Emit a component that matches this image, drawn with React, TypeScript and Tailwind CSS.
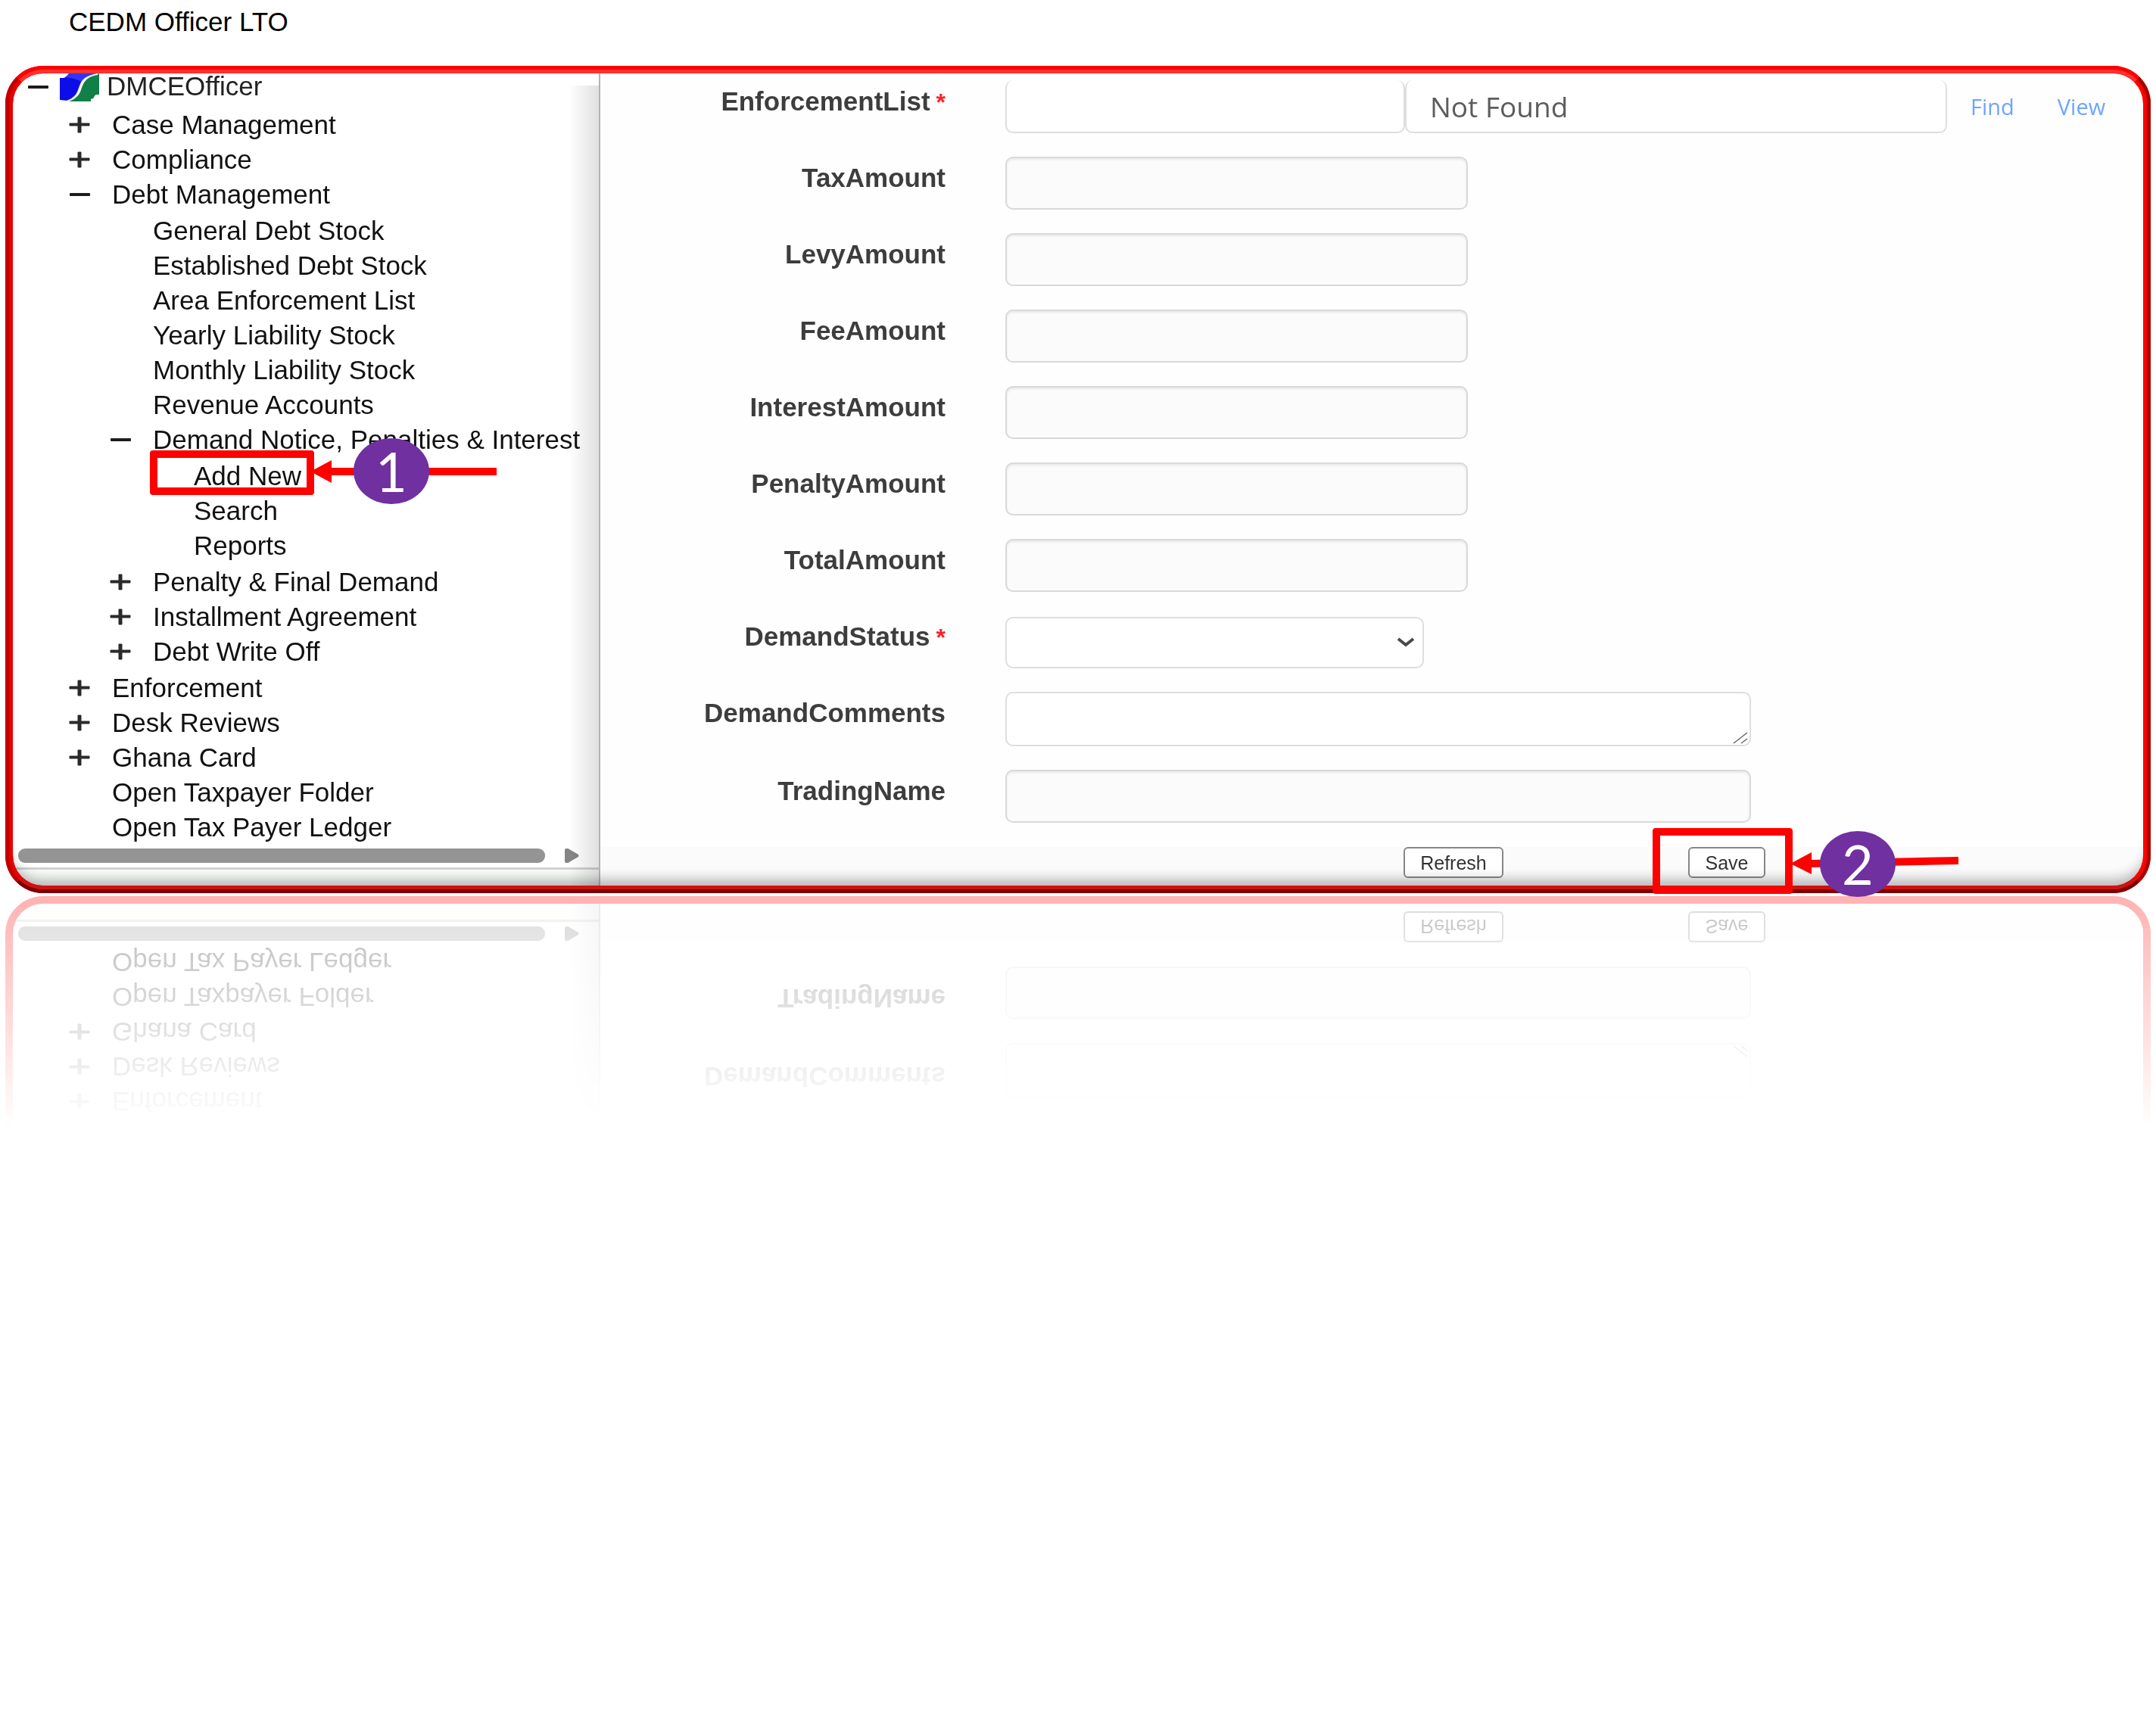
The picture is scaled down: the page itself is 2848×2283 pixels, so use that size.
import type { ReactNode } from "react";

type Node = { label: string; open?: boolean; closed?: boolean; children?: Node[] };

const tree: Node[] = [
  { label: "Case Management", closed: true },
  { label: "Compliance", closed: true },
  {
    label: "Debt Management",
    open: true,
    children: [
      { label: "General Debt Stock" },
      { label: "Established Debt Stock" },
      { label: "Area Enforcement List" },
      { label: "Yearly Liability Stock" },
      { label: "Monthly Liability Stock" },
      { label: "Revenue Accounts" },
      {
        label: "Demand Notice, Penalties & Interest",
        open: true,
        children: [{ label: "Add New" }, { label: "Search" }, { label: "Reports" }],
      },
      { label: "Penalty & Final Demand", closed: true },
      { label: "Installment Agreement", closed: true },
      { label: "Debt Write Off", closed: true },
    ],
  },
  { label: "Enforcement", closed: true },
  { label: "Desk Reviews", closed: true },
  { label: "Ghana Card", closed: true },
  { label: "Open Taxpayer Folder" },
  { label: "Open Tax Payer Ledger" },
];

const amounts = ["TaxAmount", "LevyAmount", "FeeAmount", "InterestAmount", "PenaltyAmount", "TotalAmount"];

function ToggleIcon({ open }: { open: boolean }) {
  return (
    <svg viewBox="0 0 28 22" className="h-[22px] w-7" aria-hidden="true">
      {open ? (
        <rect x="1" y="9" width="27" height="4" rx="1" fill="#1c1c1c" />
      ) : (
        <path d="M1 9h11V1h4v8h11v3H16v9h-4v-9H1z" fill="#2a2a2a" stroke="#2a2a2a" strokeWidth="1" />
      )}
    </svg>
  );
}

function TreeList({ nodes, nested }: { nodes: Node[]; nested?: boolean }) {
  return (
    <ul className={nested ? "py-0.5 pl-[54px]" : "pl-[74px]"}>
      {nodes.map((n) => (
        <li key={n.label}>
          <div className="flex h-[46px] items-center gap-[29px]">
            {n.open || n.closed ? (
              <button type="button" className="w-7 shrink-0" aria-label={n.label} aria-expanded={!!n.open}>
                <ToggleIcon open={!!n.open} />
              </button>
            ) : (
              <span className="w-7 shrink-0" />
            )}
            <a href="#" className="text-[35px] leading-[46px] whitespace-nowrap text-[#111]">
              {n.label}
            </a>
          </div>
          {n.children && <TreeList nodes={n.children} nested />}
        </li>
      ))}
    </ul>
  );
}

function Logo() {
  return (
    <svg viewBox="0 0 52 37" className="h-[37px] w-[52px]" aria-hidden="true">
      <path d="M0 6h5q4-1 7-6h36v2C36 4 31 8 28 14s-3 10-6 14-7 7-12 8l-10-1z" fill="#0d0de8" />
      <path d="M12 0h36C37 4 32 6 29 12 25 8 16 6 7 5q3-2 5-5z" fill="#3434f4" />
      <path d="M52 0v28h-3q-3 0-4 4-2 2-4 2v3H12c6-2 10-5 13-9s3-8 6-14S40 4 47 2z" fill="#118046" />
      <path d="M50 1C37 3 31 7 28 14s-3 10-6 14-7 7-13 9" fill="none" stroke="#e6f6ff" strokeWidth="2" />
    </svg>
  );
}

function Field({ id, required, children }: { id: string; required?: boolean; children: ReactNode }) {
  return (
    <div className="grid grid-cols-[456px_1fr] gap-x-[79px]">
      <label
        htmlFor={id}
        className="pt-2 text-right text-[35px] leading-10 font-bold whitespace-nowrap text-[#3d3d3d]"
      >
        {id}
        {required && <span className="pl-2 text-[32px] text-[#ff2020]">*</span>}
      </label>
      <div className="flex min-h-[70px] items-end">{children}</div>
    </div>
  );
}

function Badge({ className, children }: { className: string; children: ReactNode }) {
  return (
    <span
      className={`absolute flex h-[87px] w-[100px] items-center justify-center rounded-[50%] bg-[#7030a0] font-[Lato,sans-serif] text-[72px] leading-[87px] text-white ${className}`}
    >
      {children}
    </span>
  );
}

export default function App() {
  return (
    <div className="min-h-screen bg-white font-['Liberation_Sans',Arial,sans-serif]">
      <header className="pt-[9px] pb-[38px] pl-[91px]">
        <h1 className="text-[35px] leading-10 text-black">CEDM Officer LTO</h1>
      </header>

      <div className="relative mx-[7px]">
        <main className="flex overflow-hidden rounded-[50px] border-[10px] border-[#ff0000] bg-white [-webkit-box-reflect:below_4px_linear-gradient(to_top,rgba(0,0,0,0.3),transparent_28%)]">
          <nav className="relative flex w-[776px] shrink-0 flex-col border-r-2 border-[#b4b4b4]">
            <div className="flex h-[45px] items-start pl-[19px]">
              <button type="button" className="mt-[7px] w-7" aria-label="DMCEOfficer" aria-expanded="true">
                <ToggleIcon open />
              </button>
              <span className="ml-[15px]">
                <Logo />
              </span>
              <a href="#" className="ml-2.5 text-[35px] leading-[34px] text-[#222]">
                DMCEOfficer
              </a>
            </div>
            <TreeList nodes={tree} />
            <div className="mt-[5px] flex h-[19px] items-center gap-[26px] pl-[7px]">
              <div className="h-[19px] w-[696px] rounded-[9px] bg-[#949494]" />
              <svg viewBox="0 0 19 19" className="size-[19px]" aria-hidden="true">
                <path d="M0 2q0-2 2-2h2q1 0 2 1l12 7q1 1.500 0 3l-12 7q-1 1-2 1h-2q-2 0-2-2z" fill="#858585" />
              </svg>
            </div>
            <div className="mt-1.5 h-6 border-t-[3px] border-[#d3d3d3] bg-[#fafdf9]" />
            <div className="pointer-events-none absolute top-4 right-0 bottom-0 w-10 bg-linear-to-r from-transparent to-black/12" />
          </nav>

          <form className="flex min-w-0 flex-1 flex-col bg-[#fefefe]" onSubmit={(e) => e.preventDefault()}>
            <div className="flex flex-col gap-[31px] pt-[9px]">
              <Field id="EnforcementList" required>
                <div className="flex h-[70px] items-center">
                  <input
                    id="EnforcementList"
                    className="h-[70px] w-[528px] rounded-[10px] border-2 border-t-0 border-[#dedede] bg-white px-8"
                  />
                  <input
                    aria-label="Enforcement list name"
                    readOnly
                    defaultValue="Not Found"
                    className="h-[70px] w-[716px] rounded-[10px] border-2 border-t-0 border-[#dedede] bg-white px-[31px] font-['Open_Sans',sans-serif] text-[37px] text-[#5c5c5c]"
                  />
                  <a href="#" className="ml-[31px] font-['Open_Sans',sans-serif] text-[29px] text-[#6fa4ff]">
                    Find
                  </a>
                  <a href="#" className="ml-[57px] font-['Open_Sans',sans-serif] text-[29px] text-[#6fa4ff]">
                    View
                  </a>
                </div>
              </Field>
              {amounts.map((a) => (
                <Field key={a} id={a}>
                  <input
                    id={a}
                    readOnly
                    className="h-[70px] w-[611px] rounded-[10px] border-2 border-[#d9d9d9] bg-[#fbfbfb] px-8 shadow-[inset_0_2px_3px_rgba(0,0,0,0.08)]"
                  />
                </Field>
              ))}
              <Field id="DemandStatus" required>
                <div className="relative">
                  <select
                    id="DemandStatus"
                    className="block h-[68px] w-[553px] appearance-none rounded-[10px] border-2 border-[#dedede] bg-white px-8"
                  />
                  <svg
                    viewBox="0 0 24 14"
                    className="pointer-events-none absolute top-[27px] right-3 h-3.5 w-6"
                    aria-hidden="true"
                  >
                    <path d="M2 2l10 8 10-8" fill="none" stroke="#4a4a4a" strokeWidth="4" />
                  </svg>
                </div>
              </Field>
              <Field id="DemandComments">
                <div className="relative">
                  <textarea
                    id="DemandComments"
                    className="block h-[72px] w-[985px] resize-none rounded-[10px] border-2 border-[#dedede] bg-white px-8"
                  />
                  <svg
                    viewBox="0 0 20 16"
                    className="pointer-events-none absolute right-1 bottom-[3px] h-4 w-5"
                    aria-hidden="true"
                  >
                    <path d="M1 15L19 1M11 15L19 9" fill="none" stroke="#666" strokeWidth="1.500" />
                  </svg>
                </div>
              </Field>
              <Field id="TradingName">
                <input
                  id="TradingName"
                  readOnly
                  className="h-[70px] w-[985px] rounded-[10px] border-2 border-[#d9d9d9] bg-[#fbfbfb] px-8 shadow-[inset_0_2px_3px_rgba(0,0,0,0.08)]"
                />
              </Field>
            </div>
            <div className="mt-8 flex flex-1 items-start gap-[244px] bg-[#fbfbfb] pl-[1061px]">
              <button
                type="button"
                className="h-[41px] w-[132px] rounded-md border-2 border-[#878787] bg-white text-[25px] leading-9 text-[#333]"
              >
                Refresh
              </button>
              <button
                type="submit"
                className="h-[41px] w-[102px] rounded-md border-2 border-[#878787] bg-white text-[25px] leading-9 text-[#333]"
              >
                Save
              </button>
            </div>
          </form>
        </main>

        {/* Bevelled rim: outer ring, inner ring, then the shade along the inside */}
        <div className="pointer-events-none absolute inset-0 rounded-[50px] border-[5px] border-t-[#ff0000] border-r-[#a80000] border-b-[#7c0000] border-l-[#c00000]">
          <div className="size-full rounded-[45px] border-[5px] border-t-[#ff3030] border-r-[#ff0000] border-b-[#d21010] border-l-[#e60000]">
            <div className="size-full rounded-[40px] shadow-[inset_0_-18px_16px_-10px_rgba(0,0,0,0.28)]" />
          </div>
        </div>

        {/* Step 1: Add New */}
        <div className="pointer-events-none absolute top-[508px] left-[191px] h-[59px] w-[217px] rounded border-10 border-[#ff0000]" />
        <svg viewBox="0 0 246 30" className="absolute top-[521px] left-[403px] h-[30px] w-[246px]" aria-hidden="true">
          <path d="M0 15L28 0v10h218v10H28v10z" fill="#ff0000" />
        </svg>
        <Badge className="top-[492px] left-[460px]">1</Badge>

        {/* Step 2: Save */}
        <div className="pointer-events-none absolute top-[1007px] left-[2176px] h-[87px] w-[185px] rounded border-10 border-[#ff0000]" />
        <svg viewBox="0 0 222 32" className="absolute top-[1037px] left-[2358px] h-8 w-[222px]" aria-hidden="true">
          <path d="M0 17L28 2v10L222 8v10L28 22v9z" fill="#ff0000" />
        </svg>
        <Badge className="top-[1011px] left-[2397px]">2</Badge>
      </div>
    </div>
  );
}
